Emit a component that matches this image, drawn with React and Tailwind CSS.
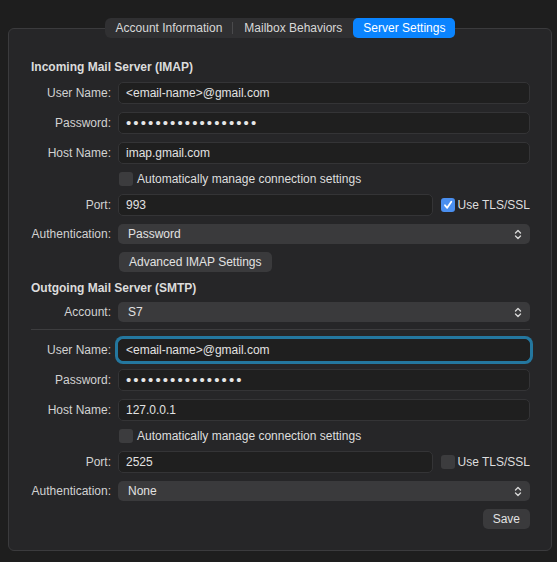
const font = { fontFamily: '"Liberation Sans", Arial, sans-serif' };

function Chevrons() {
  return (
    <svg width="8" height="11" viewBox="0 0 8 11" fill="none" stroke="#d6d6d6" strokeWidth="1.4" strokeLinecap="round" strokeLinejoin="round">
      <path d="M1.5 4 L4 1.5 L6.5 4" />
      <path d="M1.5 7 L4 9.5 L6.5 7" />
    </svg>
  );
}

function Checkbox({ checked }) {
  if (checked) {
    return (
      <span className="flex h-[14px] w-[14px] shrink-0 items-center justify-center rounded-[3px] bg-[#4a8ff0]">
        <svg width="10" height="10" viewBox="0 0 10 10" fill="none" stroke="#fff" strokeWidth="1.8" strokeLinecap="round" strokeLinejoin="round">
          <path d="M2 5.3 L4.2 7.8 L8.3 1.8" />
        </svg>
      </span>
    );
  }
  return <span className="block h-[14px] w-[14px] shrink-0 rounded-[3px] bg-[#3c3c3e]" />;
}

function Row({ label, children }) {
  return (
    <div className="flex items-center gap-[7px]">
      <span className="w-[80px] shrink-0 whitespace-nowrap text-right text-[#d2d2d2]">{label}</span>
      <div className="flex min-w-0 flex-1 items-center">{children}</div>
    </div>
  );
}

function Field({ value, focused, dots }) {
  return (
    <div
      className={
        "flex h-[22px] w-full items-center rounded-[5px] border bg-[#1f1f1f] pl-[7px] text-[#e2e2e2] " +
        (focused ? "border-[#1f1f1f] ring-[3px] ring-[#24779f]" : "border-[#343436]")
      }
    >
      {dots ? (
        <span className="text-[15px] leading-[16px] tracking-[2.1px] text-[#e6e6e6]">{value}</span>
      ) : (
        value
      )}
    </div>
  );
}

function Popup({ value }) {
  return (
    <div className="flex h-[20px] w-full items-center justify-between rounded-[5px] bg-[#3a3a3c] pl-[10px] pr-[8px] text-[#e2e2e2]">
      <span>{value}</span>
      <Chevrons />
    </div>
  );
}

function CheckRow({ label, checked }) {
  return (
    <div className="flex h-[14px] items-center gap-[4px] pl-[88px]">
      <Checkbox checked={checked} />
      <span className="whitespace-nowrap text-[#dedede]">{label}</span>
    </div>
  );
}

function PortRow({ value, tls }) {
  return (
    <Row label="Port:">
      <div className="min-w-0 flex-1">
        <Field value={value} />
      </div>
      <div className="ml-[8px] flex shrink-0 items-center gap-[3px]">
        <Checkbox checked={tls} />
        <span className="whitespace-nowrap text-[#dedede]">Use TLS/SSL</span>
      </div>
    </Row>
  );
}

function Button({ children }) {
  return (
    <span className="flex h-[20px] items-center whitespace-nowrap rounded-[5px] bg-[#3a3a3c] px-[10px] text-[#e2e2e2]">{children}</span>
  );
}

export default function App() {
  const tabs = ["Account Information", "Mailbox Behaviors", "Server Settings"];
  return (
    <div className="min-h-[562px] bg-[#1e1e1e] pl-[8px] pr-[5px] pt-[18px] text-[12px] leading-[16px]" style={font}>
      {/* segmented tabs sit on the panel's top edge */}
      <div className="relative z-10 flex justify-center">
        <div className="flex h-[20px] items-center rounded-[6px] bg-[#303032] text-[#d8d8d8]">
          {tabs.map((t, i) => (
            <div key={t} className="flex items-center">
              {i === 1 && <span className="h-[12px] w-px bg-[#4a4a4c]" />}
              <span
                className={
                  "flex h-[20px] items-center whitespace-nowrap rounded-[5px] " +
                  (i === 2 ? "bg-[#0a84ff] px-[10px] text-white" : i === 0 ? "pl-[11px] pr-[10px]" : "px-[11px]")
                }
              >
                {t}
              </span>
            </div>
          ))}
        </div>
      </div>

      <div className="-mt-[10px] flex h-[523px] flex-col gap-2 rounded-[6px] border border-[#3b3b3d] bg-[#262628] pl-[22px] pr-[21px] pt-[30px]">
        <h2 className="font-bold text-[#dcdcdc]">Incoming Mail Server (IMAP)</h2>
        <div className="-mt-px">
          <Row label="User Name:">
            <Field value="<email-name>@gmail.com" />
          </Row>
        </div>
        <Row label="Password:">
          <Field value="••••••••••••••••••" dots />
        </Row>
        <Row label="Host Name:">
          <Field value="imap.gmail.com" />
        </Row>
        <CheckRow label="Automatically manage connection settings" />
        <PortRow value="993" tls />
        <Row label="Authentication:">
          <Popup value="Password" />
        </Row>
        <div className="flex pl-[88px]">
          <Button>Advanced IMAP Settings</Button>
        </div>

        <h2 className="font-bold text-[#dcdcdc]">Outgoing Mail Server (SMTP)</h2>
        <div className="-mt-[2px]">
          <Row label="Account:">
            <Popup value="S7" />
          </Row>
        </div>
        <div className="-mt-px h-px bg-[#3d3d3f]" />
        <div className="mt-px">
          <Row label="User Name:">
            <Field value="<email-name>@gmail.com" focused />
          </Row>
        </div>
        <Row label="Password:">
          <Field value="••••••••••••••••" dots />
        </Row>
        <Row label="Host Name:">
          <Field value="127.0.0.1" />
        </Row>
        <CheckRow label="Automatically manage connection settings" />
        <PortRow value="2525" />
        <Row label="Authentication:">
          <Popup value="None" />
        </Row>
        <div className="flex justify-end">
          <Button>Save</Button>
        </div>
      </div>
    </div>
  );
}
